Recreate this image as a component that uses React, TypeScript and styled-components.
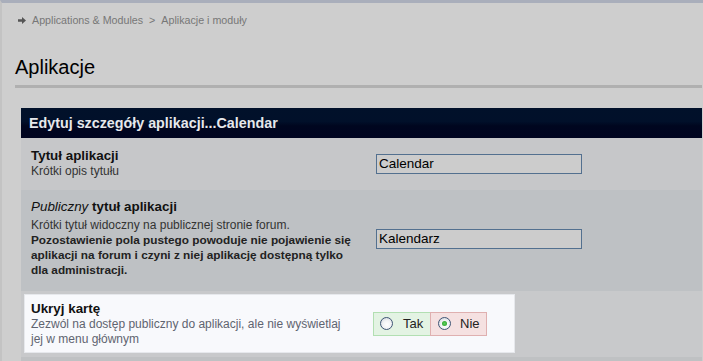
import styled, { createGlobalStyle } from 'styled-components';

const GlobalStyle = createGlobalStyle`
  html, body {
    margin: 0;
    padding: 0;
    background: #cecece;
    overflow: hidden;
  }
  body {
    font-family: 'Liberation Sans', Arial, sans-serif;
  }
`;

const Page = styled.div`
  width: 703px;
  height: 361px;
  box-sizing: border-box;
  border-top: 3px solid #a9aebb;
  border-left: 2px solid #c3c3c3;
  padding: 0 1px 0 13px;
  background: #cecece;
  overflow: hidden;
`;

const Breadcrumb = styled.div`
  display: flex;
  align-items: center;
  gap: 6px;
  padding: 10px 0 0 3px;
  height: 14px;
  font-size: 10.7px;
  color: #777;
`;

const Crumb = styled.span`
  white-space: nowrap;
`;

const Heading = styled.h1`
  margin: 28px 0 0;
  padding-bottom: 6px;
  font-size: 20px;
  line-height: 24px;
  font-weight: normal;
  color: #000;
  border-bottom: 3px solid #b0b0b0;
`;

const Panel = styled.div`
  margin: 20px 0 0 6px;
`;

const PanelHeader = styled.div`
  height: 30px;
  display: flex;
  align-items: center;
  padding-left: 8px;
  background: linear-gradient(#01112a 0%, #01102a 45%, #00061f 60%, #000420 100%);
  color: #e6e8ec;
  font-weight: bold;
  font-size: 14.3px;
`;

const Row = styled.div<{ $bg: string; $pad: string }>`
  display: grid;
  grid-template-columns: 345px 1fr;
  align-items: center;
  background: ${(p) => p.$bg};
  padding: ${(p) => p.$pad};
`;

const Label = styled.div`
  padding-left: 10px;
  padding-right: 12px;
`;

const Title = styled.div`
  font-size: 13.4px;
  line-height: 16px;
  font-weight: bold;
  color: #111;

  em {
    font-weight: normal;
  }
`;

const Desc = styled.div<{ $muted?: boolean; $gap?: number }>`
  font-size: 12px;
  line-height: 15px;
  color: ${(p) => (p.$muted ? '#5f6470' : '#333')};
  margin-top: ${(p) => p.$gap ?? 0}px;

  b {
    font-size: 11.8px;
    color: #222;
  }
`;

const Field = styled.div`
  padding-left: 10px;
`;

const TextInput = styled.input`
  box-sizing: border-box;
  width: 206px;
  height: 20px;
  border: 1px solid #53708f;
  background: #cccccc;
  padding: 0 2px;
  font-family: 'Liberation Sans', Arial, sans-serif;
  font-size: 13.5px;
  color: #000;
  outline: none;
`;

const HiliteRow = styled.div`
  background: #c8c9cb;
  padding: 3px 0 4px 3px;
`;

const HiliteBox = styled.div`
  box-sizing: border-box;
  width: 491px;
  height: 59px;
  display: grid;
  grid-template-columns: 342px 1fr;
  align-items: center;
  background: #f8f9fc;
  border: 1px solid #e6e8ec;
  padding-left: 6px;
`;

const HiliteLabel = styled.div`
  padding-right: 20px;
`;

const Toggle = styled.div`
  display: flex;
  height: 24px;
`;

const Choice = styled.label<{ $yes?: boolean }>`
  box-sizing: border-box;
  width: 57px;
  height: 24px;
  display: flex;
  align-items: center;
  gap: ${(p) => (p.$yes ? 10 : 9)}px;
  padding-left: ${(p) => (p.$yes ? 6 : 7)}px;
  background: ${(p) => (p.$yes ? '#e3f3e3' : '#f5e1e1')};
  border: 1px solid ${(p) => (p.$yes ? '#b2dfb2' : '#dfb0b0')};
  ${(p) => (p.$yes ? 'border-right: none;' : '')}
  font-size: 13px;
  color: #222;
`;

const Radio = styled.input`
  appearance: none;
  margin: 0;
  width: 13px;
  height: 13px;
  border-radius: 50%;
  border: 1px solid #3f5575;
  background: radial-gradient(circle at 55% 60%, #ffffff 0%, #f2f3f5 45%, #c9ced6 100%);
  display: grid;
  place-items: center;

  &:checked::after {
    content: '';
    width: 5px;
    height: 5px;
    border-radius: 50%;
    background: radial-gradient(circle, #5ed05e, #1e9a1e);
  }
`;

const NextRow = styled.div`
  height: 10px;
  background: #bfc1c3;
`;

const Arrow = () => (
  <svg width="8" height="7" viewBox="0 0 8 7">
    <path d="M0 2.3h4V0l4 3.5L4 7V4.7H0z" fill="#555" />
  </svg>
);

export default function App() {
  return (
    <>
      <GlobalStyle />
      <Page>
        <Breadcrumb>
          <Arrow />
          <Crumb>Applications &amp; Modules</Crumb>
          <Crumb>&gt;</Crumb>
          <Crumb>Aplikacje i moduły</Crumb>
        </Breadcrumb>
        <Heading>Aplikacje</Heading>
        <Panel>
          <PanelHeader>Edytuj szczegóły aplikacji...Calendar</PanelHeader>
          <Row $bg="#c6c7c9" $pad="10px 0 11px">
            <Label>
              <Title>Tytuł aplikacji</Title>
              <Desc>Krótki opis tytułu</Desc>
            </Label>
            <Field>
              <TextInput defaultValue="Calendar" />
            </Field>
          </Row>
          <Row $bg="#bec1c4" $pad="9px 0 13px">
            <Label>
              <Title>
                <em>Publiczny</em> tytuł aplikacji
              </Title>
              <Desc $gap={3}>
                Krótki tytuł widoczny na publicznej stronie forum.
                <br />
                <b>
                  Pozostawienie pola pustego powoduje nie pojawienie się aplikacji na forum i czyni z
                  niej aplikację dostępną tylko dla administracji.
                </b>
              </Desc>
            </Label>
            <Field>
              <TextInput defaultValue="Kalendarz" />
            </Field>
          </Row>
          <HiliteRow>
            <HiliteBox>
              <HiliteLabel>
                <Title>Ukryj kartę</Title>
                <Desc $muted>
                  Zezwól na dostęp publiczny do aplikacji, ale nie wyświetlaj jej w menu głównym
                </Desc>
              </HiliteLabel>
              <Toggle>
                <Choice $yes>
                  <Radio type="radio" name="hide" />
                  Tak
                </Choice>
                <Choice>
                  <Radio type="radio" name="hide" defaultChecked />
                  Nie
                </Choice>
              </Toggle>
            </HiliteBox>
          </HiliteRow>
          <NextRow />
        </Panel>
      </Page>
    </>
  );
}
